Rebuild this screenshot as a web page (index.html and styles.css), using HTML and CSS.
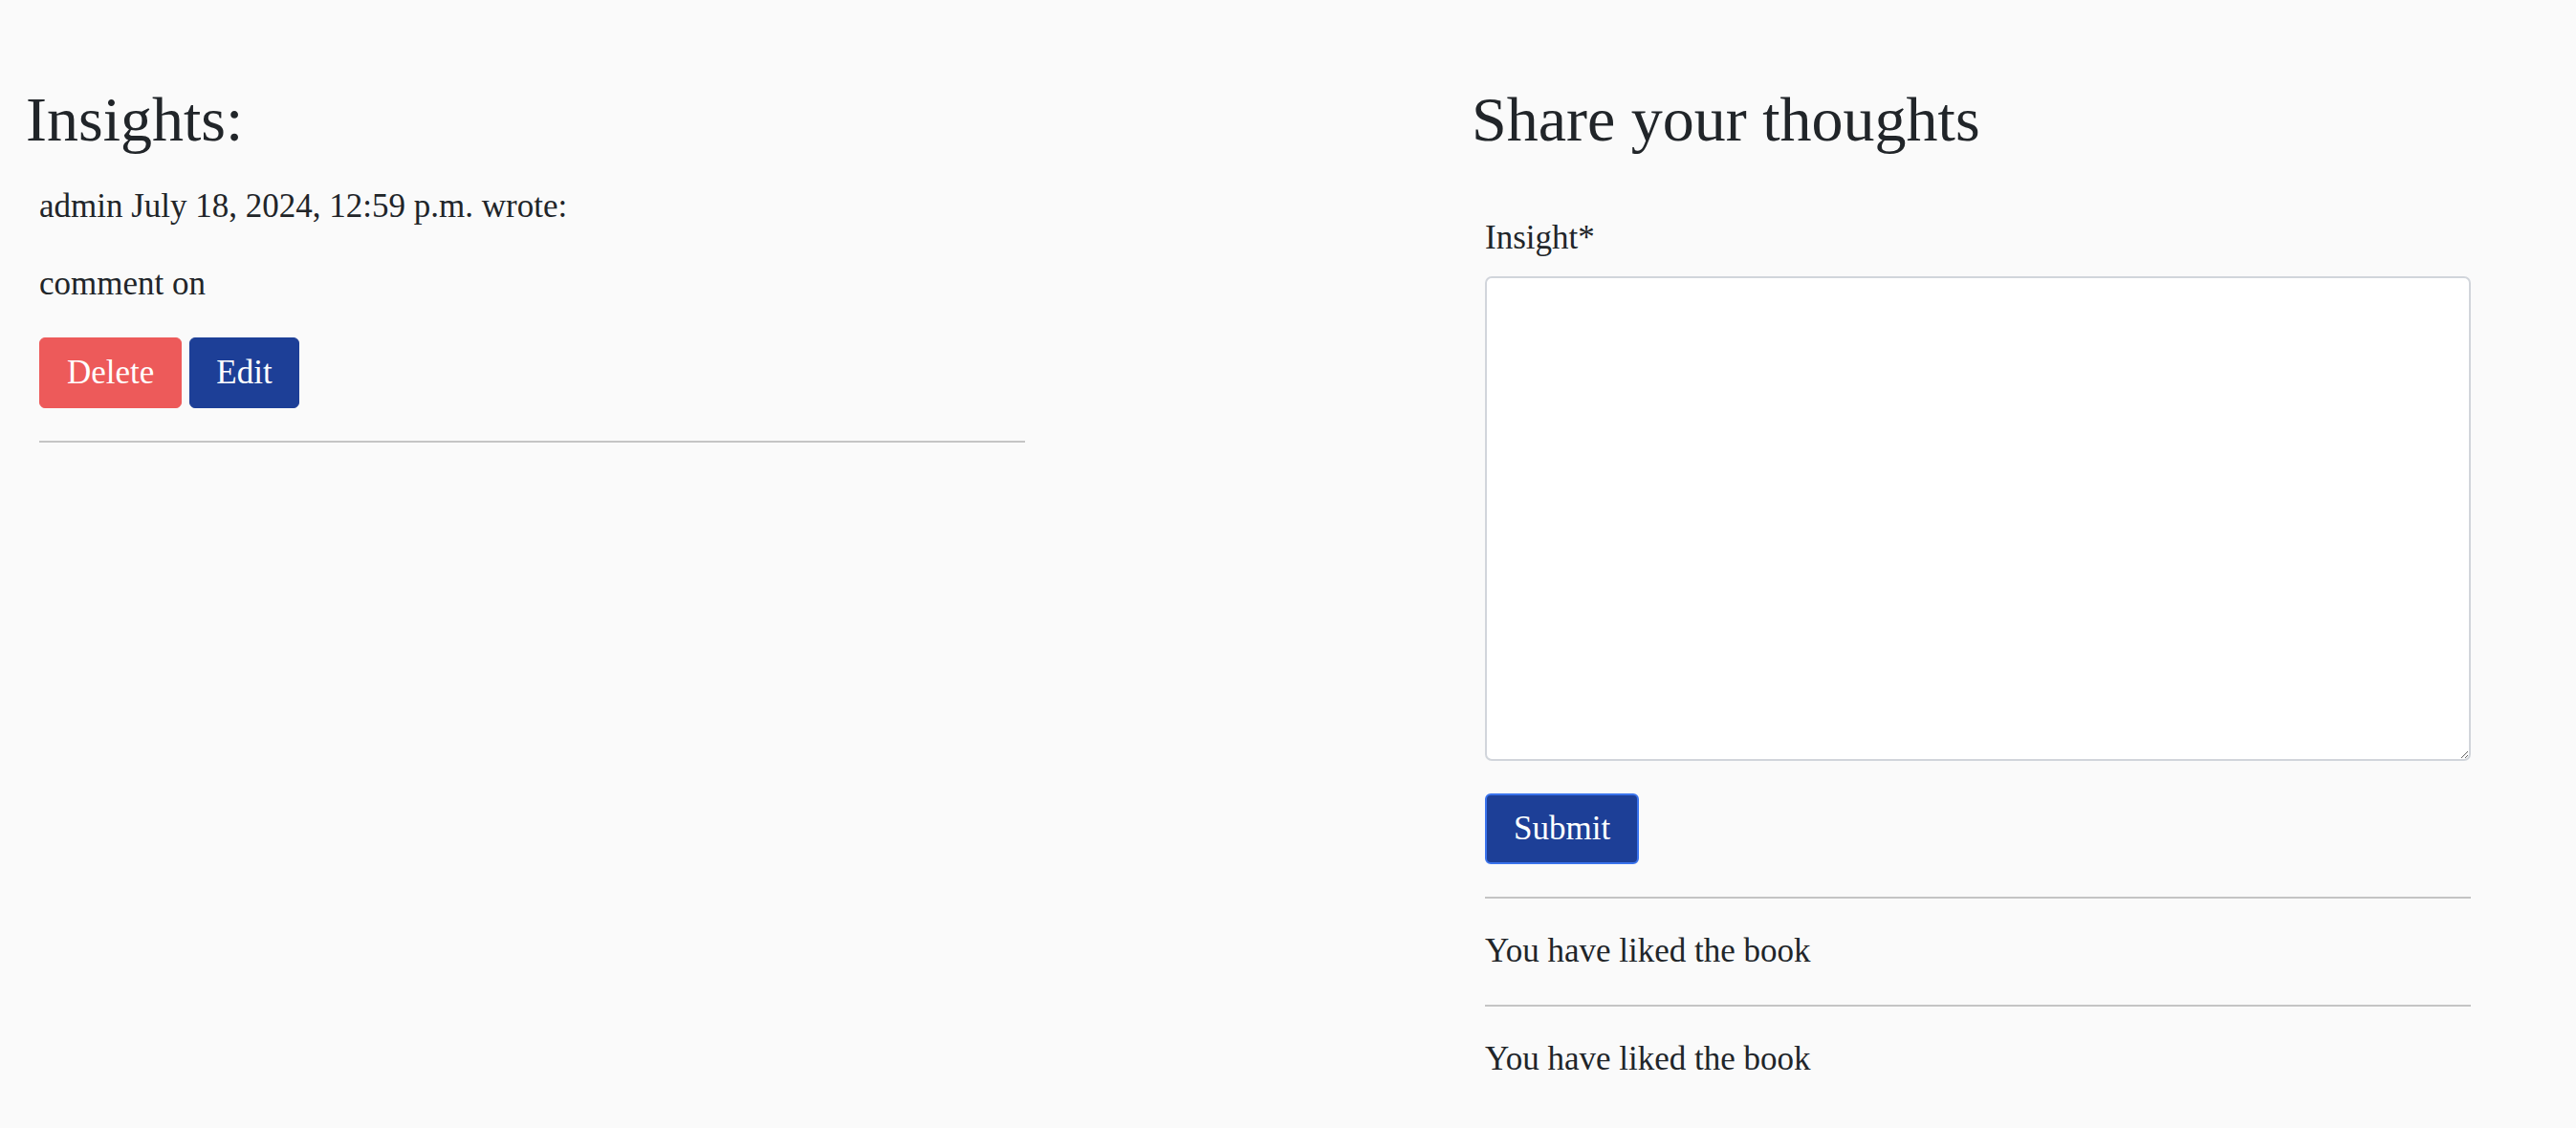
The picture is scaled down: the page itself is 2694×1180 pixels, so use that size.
FILE: index.html
```html
<!DOCTYPE html>
<html lang="en">
<head>
<meta charset="utf-8">
<title>Insights</title>
<link rel="stylesheet" href="styles.css">
</head>
<body>
<main class="page">
  <section class="col">
    <h2 class="heading">Insights:</h2>
    <div class="card-body">
      <p class="meta">admin July 18, 2024, 12:59 p.m. wrote:</p>
      <p class="comment">comment on</p>
      <div class="actions">
        <button class="btn btn-delete">Delete</button>
        <button class="btn btn-edit">Edit</button>
      </div>
      <hr class="rule">
    </div>
  </section>
  <section class="col">
    <h2 class="heading">Share your thoughts</h2>
    <form class="card-body form">
      <label class="label" for="insight">Insight*</label>
      <textarea id="insight" class="textarea"></textarea>
      <button type="button" class="btn btn-submit">Submit</button>
      <hr class="rule rule-form">
      <p class="liked">You have liked the book</p>
      <hr class="rule">
      <p class="liked">You have liked the book</p>
    </form>
  </section>
</main>
</body>
</html>
```
FILE: styles.css
```css
html, body {
  margin: 0;
  padding: 0;
  background: #fafafa;
}
body {
  font-family: "Liberation Serif", "DejaVu Serif", serif;
  color: #212529;
  font-size: 35px;
  line-height: 48px;
}
.page {
  display: grid;
  grid-template-columns: 1512px 1031px;
  padding: 85px 0 0 27px;
}
.heading {
  font-weight: 400;
  font-size: 66px;
  line-height: 1.2;
  margin: 0;
}
.card-body {
  padding: 0 0 0 14px;
  width: 1031px;
}
.meta {
  margin: 28px 0 33px;
}
.comment {
  margin: 0 0 32px;
}
.actions {
  display: flex;
  gap: 8px;
}
.btn {
  font-family: inherit;
  font-size: 35px;
  line-height: 48px;
  padding: 12px 28px;
  border: 1px solid transparent;
  border-radius: 6px;
  color: #fff;
  cursor: pointer;
}
.btn-delete {
  background: #ed5a5a;
  border-color: #ed5a5a;
}
.btn-edit {
  background: #1d3f97;
  border-color: #1d3f97;
  padding: 12px 27px;
}
.btn-submit {
  background: #1d3f97;
  border: 2px solid #3a73ec;
  padding: 11px 28px;
  display: block;
  margin-top: 34px;
}
.rule {
  border: 0;
  border-top: 2px solid #c4c4c4;
  margin: 34px 0 0;
}
.form {
  display: flex;
  flex-direction: column;
  align-items: flex-start;
}
.form .rule {
  width: 100%;
}
.label {
  margin-top: 61px;
  display: block;
}
.textarea {
  box-sizing: border-box;
  width: 100%;
  height: 507px;
  margin-top: 16px;
  border: 2px solid #d1d5db;
  border-radius: 7px;
  background: #fff;
  font-family: inherit;
  font-size: 32px;
}
.liked {
  margin: 31px 0 0;
}
.form .rule:not(.rule-form) {
  margin-top: 32px;
}
```
